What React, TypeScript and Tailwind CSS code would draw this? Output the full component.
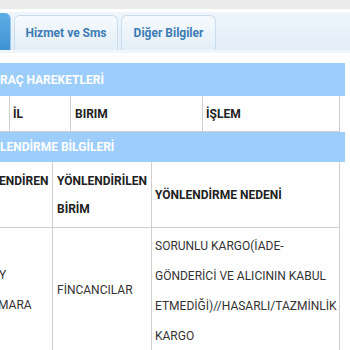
export default function App() {
    return (
        <div className="w-[350px] h-[350px] overflow-hidden bg-white font-['Roboto',sans-serif] text-[12px] text-[#222]">
            {/* Top strip */}
            <div className="h-[9px] bg-[#ebebeb]" />
            <div className="h-[3px] bg-white" />

            {/* Tabs */}
            <div className="h-[41px] flex items-end gap-[3px] bg-gradient-to-b from-[#eef5fb] to-[#e2edf8] border-b-[3px] border-[#f1f6fb]">
                <div className="w-[11px] h-[37px] rounded-tr-[6px] bg-gradient-to-b from-[#5eaee6] to-[#3f92d2] border-r border-[#9cc6ea]" />
                <div className="w-[104px] h-[35px] rounded-t-[6px] border border-b-0 border-[#c9ddef] bg-gradient-to-b from-[#f6fafd] to-[#e3eef8] flex items-center justify-center font-bold text-[#3d7cb4]">
                    Hizmet ve Sms
                </div>
                <div className="w-[95px] h-[35px] rounded-t-[6px] border border-b-0 border-[#c9ddef] bg-gradient-to-b from-[#f6fafd] to-[#e3eef8] flex items-center justify-center font-bold text-[#3d7cb4]">
                    Diğer Bilgiler
                </div>
            </div>

            <div className="h-[10px]" />

            {/* Section 1 */}
            <div className="w-[345px] h-[33px] bg-[#9dcdfb] text-white font-bold flex items-center">
                RAÇ HAREKETLERİ
            </div>
            <div className="w-[340px] h-[36px] flex border-b border-[#cfcfcf] font-bold">
                <div className="w-[10px] border-r border-[#cfcfcf]" />
                <div className="w-[61px] border-r border-[#cfcfcf] flex items-center pl-[3px]">İL</div>
                <div className="w-[132px] border-r border-[#cfcfcf] flex items-center pl-[4px]">BIRIM</div>
                <div className="w-[137px] border-r border-[#cfcfcf] flex items-center pl-[3px]">İŞLEM</div>
            </div>

            {/* Section 2 */}
            <div className="w-[345px] h-[30px] bg-[#9dcdfb] text-white font-bold flex items-center">
                LENDİRME BİLGİLERİ
            </div>
            <div className="w-[340px] h-[66px] flex border-b border-[#cfcfcf] font-bold leading-[28px]">
                <div className="w-[53px] border-r border-[#cfcfcf] pt-[5px] overflow-hidden whitespace-nowrap">
                    <div className="-ml-[1px]">ENDİREN</div>
                </div>
                <div className="w-[99px] border-r border-[#cfcfcf] pt-[5px] pl-[4px]">
                    <div>YÖNLENDİRİLEN</div>
                    <div>BİRİM</div>
                </div>
                <div className="w-[188px] border-r border-[#cfcfcf] flex items-center pl-[3px]">
                    YÖNLENDİRME NEDENİ
                </div>
            </div>
            <div className="w-[340px] flex leading-[30px] text-[#333]">
                <div className="w-[53px] border-r border-[#cfcfcf] flex flex-col justify-center overflow-hidden whitespace-nowrap">
                    <div className="-ml-[1px]">Y</div>
                    <div className="-ml-[2px]">MARA</div>
                </div>
                <div className="w-[99px] border-r border-[#cfcfcf] flex items-center pl-[4px]">FİNCANCILAR</div>
                <div className="w-[188px] border-r border-[#cfcfcf] pt-[3px] pl-[3px]">
                    <div>SORUNLU KARGO(İADE-</div>
                    <div>GÖNDERİCİ VE ALICININ KABUL</div>
                    <div>ETMEDİĞİ)//HASARLI/TAZMİNLİK</div>
                    <div>KARGO</div>
                </div>
            </div>
        </div>
    );
}
